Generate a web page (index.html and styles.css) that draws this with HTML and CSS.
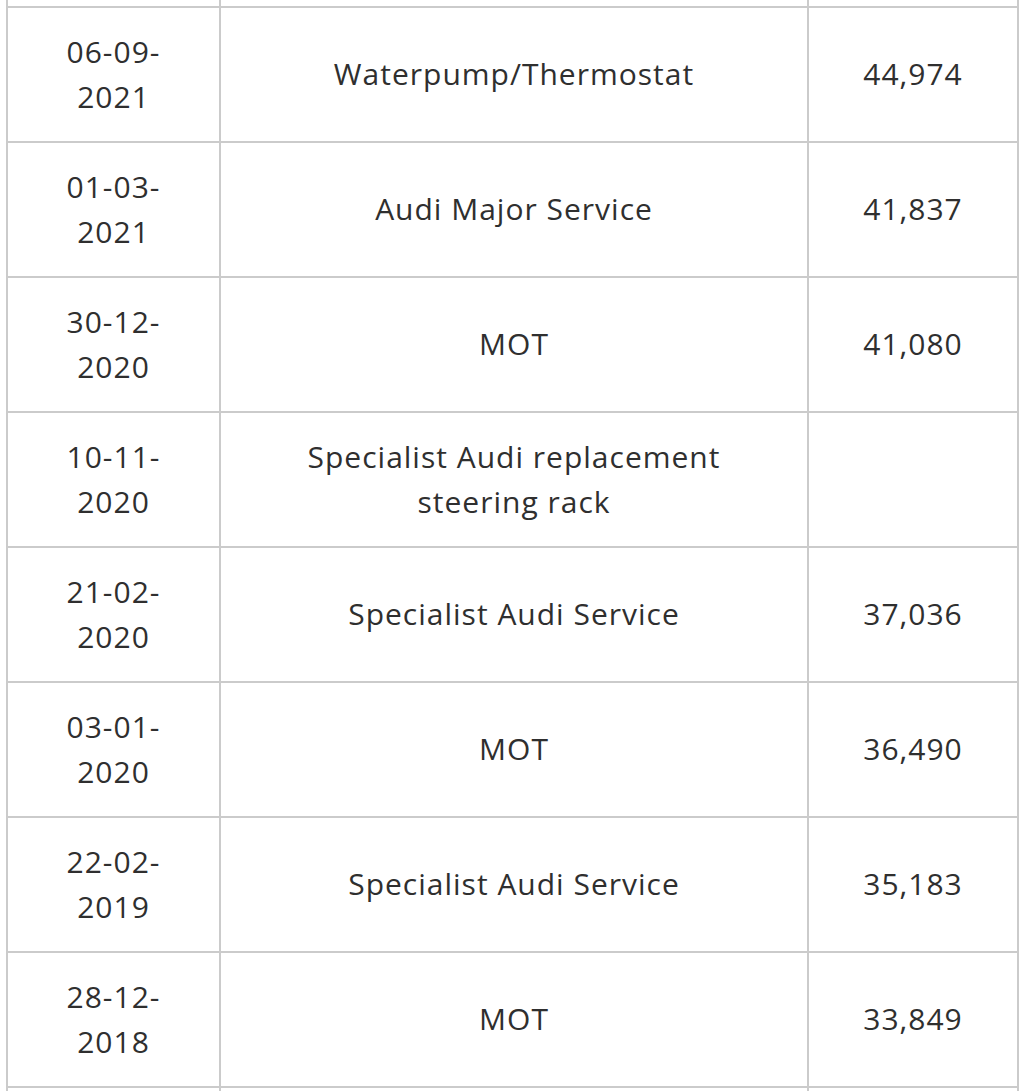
FILE: index.html
```html
<!DOCTYPE html>
<html lang="en">
<head>
<meta charset="utf-8">
<title>Service history</title>
<link rel="stylesheet" href="styles.css">
</head>
<body>
<table class="history">
  <colgroup>
    <col class="col-date">
    <col class="col-work">
    <col class="col-miles">
  </colgroup>
  <tbody>
    <tr class="row-edge row-top"><td></td><td></td><td></td></tr>
    <tr><td>06-09-2021</td><td>Waterpump/Thermostat</td><td>44,974</td></tr>
    <tr><td>01-03-2021</td><td>Audi Major Service</td><td>41,837</td></tr>
    <tr><td>30-12-2020</td><td>MOT</td><td>41,080</td></tr>
    <tr><td>10-11-2020</td><td>Specialist Audi replacement steering rack</td><td></td></tr>
    <tr><td>21-02-2020</td><td>Specialist Audi Service</td><td>37,036</td></tr>
    <tr><td>03-01-2020</td><td>MOT</td><td>36,490</td></tr>
    <tr><td>22-02-2019</td><td>Specialist Audi Service</td><td>35,183</td></tr>
    <tr><td>28-12-2018</td><td>MOT</td><td>33,849</td></tr>
    <tr class="row-edge row-bottom"><td></td><td></td><td></td></tr>
  </tbody>
</table>
</body>
</html>
```
FILE: styles.css
```css
html, body {
  margin: 0;
  padding: 0;
  background: #ffffff;
}

body {
  padding-left: 6px;
}

.history {
  border-collapse: collapse;
  table-layout: fixed;
  width: 1011px;
  font-family: "Open Sans", "Liberation Sans", sans-serif;
  font-size: 30px;
  letter-spacing: 1px;
  line-height: 44.5px;
  color: #2f2f2f;
}

.col-date { width: 213px; }
.col-work { width: 588px; }
.col-miles { width: 210px; }

.history td {
  border: 2px solid #cbcbcb;
  text-align: center;
  vertical-align: middle;
  height: 135px;
  padding: 0 40px;
  box-sizing: border-box;
}

.history .row-edge td {
  padding: 0;
}

.history .row-top td {
  height: 7px;
  border-top: none;
}

.history .row-bottom td {
  height: 4px;
  border-bottom: none;
}
```
